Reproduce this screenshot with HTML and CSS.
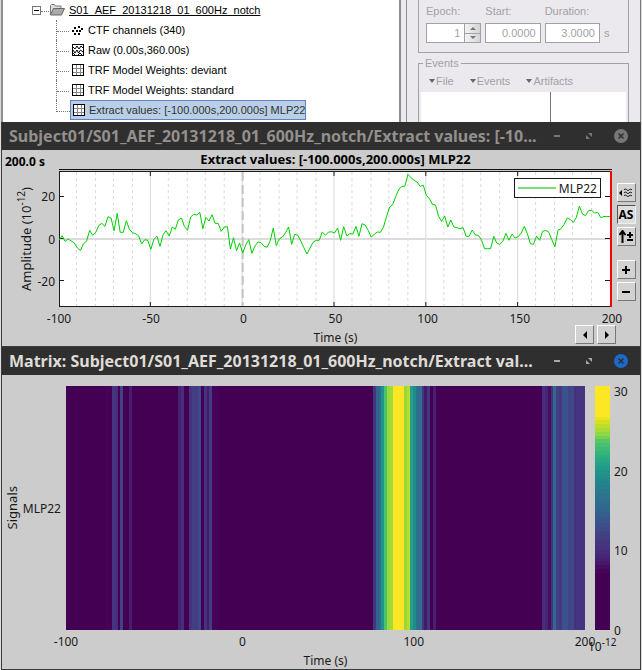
FILE: index.html
```html
<!DOCTYPE html>
<html lang="en">
<head>
  <meta charset="UTF-8">
  <meta name="viewport" content="width=device-width, initial-scale=1.0">
  <title>Extract values - MLP22</title>
  <link rel="stylesheet" href="styles.css">
</head>
<body>
  <!-- Icons shared by several rows and title bars -->
  <svg class="icon-defs" aria-hidden="true">
    <symbol id="icon-matrix" viewBox="0 0 12 12">
      <rect x="0.5" y="0.5" width="11" height="11" fill="#fff" stroke="#000"/>
      <path d="M4.5 1v10M8.5 1v10M1 4.5h10M1 8.5h10" stroke="#888"/>
    </symbol>
    <symbol id="icon-min" viewBox="0 0 14 14">
      <rect x="4" y="6" width="6" height="2" fill="currentColor"/>
    </symbol>
    <symbol id="icon-max" viewBox="0 0 14 14">
      <path d="M6 4h4v4zM4 6v4h4z" fill="currentColor"/>
    </symbol>
    <symbol id="icon-close" viewBox="0 0 14 14">
      <circle cx="7" cy="7" r="7" fill="currentColor"/>
      <path d="M4.500 4.500l5 5M9.500 4.500l-5 5" stroke="#2f2f2f" stroke-width="1.500"/>
    </symbol>
  </svg>

  <main class="desktop">
    <section class="app">
      <div class="tree">
        <div class="tree-root">
          <span class="toggle">
            <svg width="9" height="9"><rect x="0.5" y="0.5" width="8" height="8" fill="#fff" stroke="#777"/><path d="M2 4.5h5" stroke="#000"/></svg>
          </span>
          <svg class="folder" width="15" height="12" viewBox="0 0 15 12">
            <path d="M0.5 10.5v-9l1-1h3l1 1.5h5.500v2.500" fill="#ddd" stroke="#777"/>
            <path d="M0.500 11l3-6.500h11l-3 6.500z" fill="#aaa" stroke="#666"/>
          </svg>
          <a href="#" class="study">S01_AEF_20131218_01_600Hz_notch</a>
        </div>
        <ul class="tree-items">
          <li><a href="#">
            <svg width="12" height="12" viewBox="0 0 12 12"><path d="M2 3h2v2H2zM6 2h2v2H6zM9 4h2v2H9zM0 6h2v2H0zM4 6h2v2H4zM7 6h2v2H7zM2 9h2v2H2zM6 9h2v2H6z"/></svg>
            CTF channels (340)</a></li>
          <li><a href="#">
            <svg width="12" height="12" viewBox="0 0 12 12"><rect x="0.5" y="0.5" width="11" height="11" fill="#fff" stroke="#000"/><path d="M1 3l2 2 2-3 2 3 2-3 2 2M1 6l2 3 2-3 1.500 3 2-3 2.500 2M1 9l2 2M6 11l2-2 2 2" fill="none" stroke="#000"/></svg>
            Raw (0.00s,360.00s)</a></li>
          <li><a href="#"><svg width="12" height="12"><use href="#icon-matrix"/></svg>TRF Model Weights: deviant</a></li>
          <li><a href="#"><svg width="12" height="12"><use href="#icon-matrix"/></svg>TRF Model Weights: standard</a></li>
          <li><a href="#" class="selected"><svg width="12" height="12"><use href="#icon-matrix"/></svg>Extract values: [-100.000s,200.000s] MLP22</a></li>
        </ul>
      </div>

      <div class="splitter"></div>

      <div class="record">
        <div class="group time-group">
          <div class="field">
            <label for="epoch">Epoch:</label>
            <div class="spinner">
              <input id="epoch" type="text" value="1" disabled>
              <div class="spin-buttons">
                <button type="button" aria-label="Next epoch" disabled><svg width="6" height="3"><path d="M0 3l3-3 3 3z" fill="#777"/></svg></button>
                <button type="button" aria-label="Previous epoch" disabled><svg width="6" height="3"><path d="M0 0l3 3 3-3z" fill="#777"/></svg></button>
              </div>
            </div>
          </div>
          <div class="field">
            <label for="start">Start:</label>
            <input id="start" type="text" value="0.0000" disabled>
          </div>
          <div class="field">
            <label for="duration">Duration:</label>
            <input id="duration" type="text" value="3.0000" disabled>
          </div>
          <span class="unit">s</span>
        </div>

        <fieldset class="group events">
          <legend>Events</legend>
          <div class="menu">
            <button type="button" disabled><svg width="6" height="4"><path d="M0 0h6l-3 4z" fill="#666"/></svg>File</button>
            <button type="button" disabled><svg width="6" height="4"><path d="M0 0h6l-3 4z" fill="#666"/></svg>Events</button>
            <button type="button" disabled><svg width="6" height="4"><path d="M0 0h6l-3 4z" fill="#666"/></svg>Artifacts</button>
          </div>
          <div class="lists">
            <div></div>
            <div></div>
          </div>
        </fieldset>
      </div>
    </section>

    <section class="window inactive">
      <header class="titlebar">
        <h1>Subject01/S01_AEF_20131218_01_600Hz_notch/Extract values: [-10...</h1>
        <div class="window-buttons">
          <button type="button" aria-label="Minimize"><svg width="14" height="14"><use href="#icon-min"/></svg></button>
          <button type="button" aria-label="Maximize"><svg width="14" height="14"><use href="#icon-max"/></svg></button>
          <button type="button" class="close" aria-label="Close"><svg width="14" height="14"><use href="#icon-close"/></svg></button>
        </div>
      </header>
      <div class="series">
        <span class="cursor-time">200.0 s</span>
        <h2 class="series-title">Extract values: [-100.000s,200.000s] MLP22</h2>
        <div class="y-label"><span>Amplitude (10<sup>-12</sup>)</span></div>
        <div class="y-ticks"><span>20</span><span>0</span><span>-20</span></div>
        <div class="plot">
          <svg id="series-plot" viewBox="0 0 552 136" preserveAspectRatio="none"></svg>
          <div class="legend"><i></i>MLP22</div>
        </div>
        <div class="x-ticks">
          <span>-100</span><span>-50</span><span>0</span><span>50</span><span>100</span><span>150</span><span>200</span>
        </div>
        <div class="x-label">Time (s)</div>
        <div class="tools">
          <button type="button" aria-label="Display mode"><svg width="14" height="12" viewBox="0 0 14 12"><path d="M0 6l3-3v6z"/><path d="M5 3c2-3 3 2 5 0 1-1 2-1 3 0M5 6c2-3 3 2 5 0 1-1 2-1 3 0M5 9c2-3 3 2 5 0 1-1 2-1 3 0" fill="none" stroke="#000"/></svg></button>
          <button type="button" class="pressed">AS</button>
          <button type="button" aria-label="Flip amplitude"><svg width="15" height="13" viewBox="0 0 15 13"><path d="M3.500 13V2M0.500 5l3-4 3 4" fill="none" stroke="#000" stroke-width="2"/><path d="M8 5h6M11 2v6M8 10h6" stroke="#000" stroke-width="2"/></svg></button>
          <button type="button" class="zoom-in" aria-label="Zoom in"><svg width="8" height="8"><path d="M0 4h8M4 0v8" stroke="#000" stroke-width="2"/></svg></button>
          <button type="button" aria-label="Zoom out"><svg width="8" height="8"><path d="M0 4h8" stroke="#000" stroke-width="2"/></svg></button>
        </div>
        <div class="nav">
          <button type="button" aria-label="Previous page"><svg width="4" height="8"><path d="M4 0v8L0 4z"/></svg></button>
          <button type="button" aria-label="Next page"><svg width="4" height="8"><path d="M0 0v8l4-4z"/></svg></button>
        </div>
      </div>
    </section>

    <section class="window matrix-window">
      <header class="titlebar">
        <h1>Matrix: Subject01/S01_AEF_20131218_01_600Hz_notch/Extract val...</h1>
        <div class="window-buttons">
          <button type="button" aria-label="Minimize"><svg width="14" height="14"><use href="#icon-min"/></svg></button>
          <button type="button" aria-label="Maximize"><svg width="14" height="14"><use href="#icon-max"/></svg></button>
          <button type="button" class="close" aria-label="Close"><svg width="14" height="14"><use href="#icon-close"/></svg></button>
        </div>
      </header>
      <div class="matrix">
        <div class="row-axis"><span>Signals</span></div>
        <div class="row-name">MLP22</div>
        <svg id="heatmap" class="heatmap" preserveAspectRatio="none"></svg>
        <svg id="colorbar" class="colorbar" preserveAspectRatio="none"></svg>
        <div class="bar-ticks"><span>30</span><span>20</span><span>10</span><span>0</span></div>
        <div class="matrix-x">
          <span>-100</span><span>0</span><span>100</span><span>200</span>
          <div class="exponent">10<sup>-12</sup></div>
        </div>
        <div class="matrix-label">Time (s)</div>
      </div>
    </section>
  </main>

  <script src="script.js"></script>
</body>
</html>
```

FILE: styles.css
```css
:root {
  --face: #cccccc;
  --frame: #2f2f2f;
  --panel: #ebe9ed;
  --muted: #a3a1a6;
}

* {
  box-sizing: border-box;
}

body {
  margin: 0;
  background: #dcdcdc;
  font-family: "Noto Sans", "Open Sans", sans-serif;
  font-size: 12px;
  color: #1a1a1a;
}

button,
input {
  font: inherit;
  color: inherit;
}

button {
  padding: 0;
  border: 0;
  background: none;
}

svg {
  display: block;
}

h1,
h2 {
  margin: 0;
}

.icon-defs {
  position: absolute;
  width: 0;
  height: 0;
}

.desktop {
  display: flex;
  flex-direction: column;
  min-height: 100vh;
}

/* Main application behind the figures */
.app {
  display: grid;
  grid-template-columns: 398fr 8px 233fr;
  height: 122px;
  overflow: hidden;
  margin: 0 1px;
  border-right: 1px solid #777;
  background: var(--panel);
  font-family: "Liberation Sans", Arial, sans-serif;
  font-size: 11px;
}

.tree {
  border-left: 2px solid #8e8e8e;
  background: #fff;
  color: #000;
  overflow: hidden;
  white-space: nowrap;
}

.tree a {
  color: inherit;
  text-decoration: none;
}

.tree-root {
  display: flex;
  align-items: center;
  height: 20px;
  padding-left: 29px;
}

.toggle {
  display: flex;
  width: 18px;
}

.toggle::after {
  content: "";
  width: 8px;
  height: 5px;
  border-bottom: 1px dotted #777;
}

.tree .study {
  margin-left: 4px;
  text-decoration: underline;
}

.tree-items {
  margin: 0;
  padding: 0 0 0 53px;
  list-style: none;
}

.tree-items li {
  display: flex;
  height: 20px;
  border-left: 1px dotted #777;
}

.tree-items li:last-child {
  border-left-color: transparent;
}

.tree-items li::before {
  content: "";
  width: 12px;
  height: 11px;
  border-bottom: 1px dotted #777;
}

.tree-items li:last-child::before {
  width: 13px;
  margin-left: -1px;
  border-left: 1px dotted #777;
}

.tree-items a {
  display: flex;
  align-items: center;
  gap: 4px;
  padding: 0 0 0 2px;
  border: 1px solid transparent;
}

.tree-items .selected {
  border-color: #6382bf;
  background: #b8cfe5;
  color: #333;
}

.splitter {
  border: solid #8e8e8e;
  border-width: 0 1px 0 2px;
}

.record {
  min-width: 0;
  padding: 0 11px;
  color: var(--muted);
}

.group {
  margin: 0;
  border: 1px solid var(--muted);
}

.time-group {
  display: flex;
  align-items: flex-end;
  gap: 4px;
  height: 53px;
  padding: 0 20px 9px 7px;
  border-top: 0;
}

.field {
  flex: 1;
  min-width: 0;
}

.field label {
  display: block;
  margin-bottom: 4px;
  line-height: 16px;
}

.record input {
  display: block;
  width: 100%;
  height: 20px;
  padding: 0 4px;
  border: 1px solid var(--muted);
  background: #fff;
  color: var(--muted);
  text-align: right;
}

.spinner {
  display: flex;
}

.spin-buttons {
  display: flex;
  flex-direction: column;
  flex: none;
  width: 16px;
  border: 1px solid var(--muted);
  border-left: 0;
}

.spin-buttons button {
  display: flex;
  flex: 1;
  align-items: center;
  justify-content: center;
  background: linear-gradient(to right, #f4f4f4, #d4d4d8);
}

.spin-buttons button + button {
  border-top: 1px solid var(--muted);
}

.unit {
  width: 4px;
  line-height: 20px;
}

.events {
  height: 80px;
  margin-top: 3px;
  padding: 0 2px;
}

.events legend {
  margin-left: 2px;
  padding: 0 2px;
  line-height: 14px;
}

.menu {
  display: flex;
  gap: 16px;
  height: 22px;
  padding-left: 8px;
}

.menu button {
  display: flex;
  align-items: center;
  gap: 1px;
  color: var(--muted);
}

.lists {
  display: flex;
  height: 40px;
}

.lists div {
  flex: 130;
  background: #fff;
}

.lists div + div {
  flex: 75;
  border-left: 1px solid #777;
}

/* Figure windows */
.window {
  display: flex;
  flex-direction: column;
  margin: 0 1px;
  border: 1px solid #3a3d3e;
  border-top: 0;
  background: var(--face);
}

.titlebar {
  display: flex;
  align-items: center;
  justify-content: space-between;
  height: 28px;
  padding: 0 12px 0 7px;
  background: var(--frame);
  color: #dfdbd7;
}

.titlebar h1 {
  overflow: hidden;
  font-size: 16px;
  font-weight: 700;
  line-height: 28px;
  white-space: nowrap;
}

.window-buttons {
  display: flex;
  flex: none;
  gap: 18px;
  color: #a8a8a8;
}

.window-buttons .close {
  color: #1b6acb;
}

.inactive .titlebar {
  color: #948f8c;
}

.inactive .window-buttons,
.inactive .window-buttons .close {
  color: #777;
}

/* Time series figure */
.series {
  display: grid;
  grid-template-columns: 34px 23px 1fr 28px;
  grid-template-rows: 21px 136px 22px 17px;
}

.cursor-time {
  grid-area: 1 / 1 / 2 / 3;
  padding-left: 3px;
  color: #000;
  font-weight: 700;
  line-height: 24px;
  white-space: nowrap;
}

.series-title {
  grid-area: 1 / 3;
  height: 20px;
  border-bottom: 1px solid #111;
  color: #000;
  font-size: 13px;
  line-height: 19px;
  text-align: center;
}

.y-label {
  grid-area: 2 / 1;
  display: flex;
  align-items: center;
  justify-content: flex-end;
}

.y-label span,
.row-axis span {
  writing-mode: vertical-rl;
  transform: rotate(180deg);
  white-space: nowrap;
}

.y-label span {
  font-size: 13px;
  line-height: 20px;
}

sup {
  font-size: 10px;
  line-height: 0;
}

.y-ticks {
  grid-area: 2 / 2;
  display: flex;
  flex-direction: column;
  justify-content: space-between;
  padding: 17px 4px 17px 0;
  line-height: 17px;
  text-align: right;
}

.plot {
  position: relative;
  grid-area: 2 / 3;
  border-right: 2px solid #f00;
}

.plot svg {
  width: 100%;
  height: 100%;
}

#series-plot * {
  fill: none;
  vector-effect: non-scaling-stroke;
}

#series-plot .bg {
  fill: #fff;
}

.grid-minor {
  stroke: #dadada;
  stroke-dasharray: 3 3;
}

.grid-major {
  stroke: #d8d8d8;
}

.grid-zero {
  stroke: #dcdcdc;
  stroke-width: 2;
}

.time-zero {
  stroke: #c4c4c4;
  stroke-width: 2;
  stroke-dasharray: 9 4;
}

.axis {
  stroke: #1a1a1a;
}

.trace {
  stroke: #00d000;
  stroke-width: 1;
}

.legend {
  position: absolute;
  top: 7px;
  right: 9px;
  display: flex;
  align-items: center;
  gap: 3px;
  height: 20px;
  padding: 0 3px;
  border: 1px solid #1a1a1a;
  background: #fff;
}

.legend i {
  width: 38px;
  height: 2px;
  background: #78e078;
}

.x-ticks {
  grid-area: 3 / 3;
  display: flex;
  justify-content: space-between;
  line-height: 24px;
}

.x-ticks span,
.matrix-x span {
  display: flex;
  justify-content: center;
  width: 0;
}

.x-label {
  grid-area: 4 / 3;
  line-height: 17px;
  text-align: center;
}

.tools {
  grid-area: 2 / 4 / 4 / 5;
  display: flex;
  flex-direction: column;
  align-items: center;
  gap: 3px;
  padding-top: 12px;
}

.tools button,
.nav button {
  display: flex;
  align-items: center;
  justify-content: center;
  width: 19px;
  height: 19px;
  border: 1px solid;
  border-color: #fff #777 #777 #fff;
  background: #d2d2d2;
  color: #000;
}

.tools .pressed {
  border-color: #555 #eee #eee #555;
  background: #dedede;
  font-weight: 700;
}

.tools .zoom-in {
  margin-top: 11px;
}

.nav {
  grid-area: 3 / 3 / 5 / 5;
  display: flex;
  align-self: end;
  justify-self: end;
  gap: 3px;
  padding: 0 24px 2px 0;
}

/* Matrix figure */
.matrix-window {
  flex: 1;
}

.matrix {
  display: grid;
  flex: 1;
  grid-template-columns: 19px 45px 1fr 10px 15px 30px;
  grid-template-rows: minmax(160px, 1fr) 22px 17px;
  padding-top: 11px;
}

.row-axis {
  grid-area: 1 / 1;
  display: flex;
  align-items: center;
  justify-content: center;
  font-size: 13px;
}

.row-name {
  grid-area: 1 / 2;
  align-self: center;
  padding-right: 5px;
  text-align: right;
}

/* Images stretch to the row and never size it */
.heatmap,
.colorbar {
  contain: size;
  width: 100%;
  height: 100%;
}

.heatmap {
  grid-area: 1 / 3;
}

.colorbar {
  grid-area: 1 / 5;
}

.bar-ticks {
  grid-area: 1 / 6;
  display: flex;
  flex-direction: column;
  justify-content: space-between;
  margin: -3px 0 -9px;
  padding-left: 4px;
  line-height: 17px;
}

.matrix-x {
  position: relative;
  grid-area: 2 / 3;
  display: grid;
  grid-template-columns: 34fr 33fr 33fr 0;
  line-height: 24px;
}

/* The scale factor prints over the last tick label */
.exponent {
  position: absolute;
  top: 5px;
  left: 100%;
  padding-left: 3px;
  white-space: nowrap;
}

.matrix-label {
  grid-area: 3 / 3;
  line-height: 17px;
  text-align: center;
}
```

FILE: script.js
```js
// MLP22 time series, 181 samples from -100 s to 200 s
const samples = [
  -4, 10, -7, 0, -6, -12, -27, -35, -14, -7,
  26, 11, 20, 41, 47, 38, 67, 63, 25, 77,
  20, 20, 55, 29, 19, 16, 10, -15, -2, -4,
  -31, -1, 8, -22, 13, 25, 9, 36, 29, 57,
  63, 37, 26, 66, 74, 72, 80, 31, 65, 54,
  73, 47, 47, 23, 36, 37, -30, 4, -35, -12,
  -42, -18, -2, -43, -21, -9, -11, -22, -25, -5,
  33, -20, 1, 6, 19, 36, -16, 14, 11, -7,
  -26, -45, -27, -10, -4, -4, 21, 12, 20, 22,
  18, 33, -4, 37, 9, 16, 15, 38, 8, 46,
  42, 26, 5, 15, 21, 20, 36, 67, 96, 103,
  127, 149, 158, 159, 194, 184, 177, 171, 158, 162,
  131, 121, 104, 102, 68, 53, 69, 36, 57, 36,
  34, 31, 34, 8, 8, 27, 12, 11, -2, -29,
  -29, -29, 8, -12, -16, -7, 17, -4, 15, 3,
  7, 18, 38, 16, -14, -16, 9, -4, 23, 26,
  20, -2, -23, 26, 31, 44, 63, 59, 50, 65,
  99, 75, 70, 85, 86, 78, 80, 64, 68, 67,
  68
];
const UNIT = 0.157; // 1e-12 per count
const values = samples.map(s => s * UNIT);

// Colormap stops: value, then r g b
const stops = [
  [7.2, 68, 1, 84],
  [8.5, 72, 26, 108],
  [10, 71, 47, 125],
  [12.5, 63, 71, 136],
  [15, 49, 100, 141],
  [17.5, 41, 121, 142],
  [20, 31, 149, 139],
  [22, 46, 179, 124],
  [23.5, 78, 195, 107],
  [24.5, 139, 214, 70],
  [26, 210, 226, 27],
  [27, 253, 231, 37]
];

function colorFor(v) {
  const last = stops.length - 1;
  if (v <= stops[0][0]) return `rgb(${stops[0].slice(1).join(',')})`;
  if (v >= stops[last][0]) return `rgb(${stops[last].slice(1).join(',')})`;
  const i = stops.findIndex(s => s[0] > v);
  const a = stops[i - 1];
  const b = stops[i];
  const t = (v - a[0]) / (b[0] - a[0]);
  const rgb = [1, 2, 3].map(k => Math.round(a[k] + (b[k] - a[k]) * t));
  return `rgb(${rgb.join(',')})`;
}

function add(parent, name, attrs) {
  const el = document.createElementNS('http://www.w3.org/2000/svg', name);
  for (const key in attrs) el.setAttribute(key, attrs[key]);
  parent.appendChild(el);
}

function drawSeries() {
  const svg = document.getElementById('series-plot');
  const W = 552;
  const H = 136;
  const x = t => Math.round((t + 100) / 300 * W);
  const y = v => 68 - v * 2.12;
  add(svg, 'rect', { class: 'bg', width: W, height: H });

  for (let t = -90; t < 200; t += 10) {
    const cls = t % 50 === 0 ? 'grid-major' : 'grid-minor';
    add(svg, 'path', { class: cls, d: `M${x(t) - 0.5} 1V${H - 1}` });
  }
  add(svg, 'path', { class: 'grid-zero', d: `M0 68H${W}` });
  add(svg, 'path', { class: 'time-zero', d: `M${x(0)} 1V${H - 1}` });

  add(svg, 'path', { class: 'axis', d: `M0.5 0V${H}M0 0.5H${W}M0 ${H - 0.5}H${W}` });
  for (let t = -50; t < 200; t += 50) {
    if (t !== 0) add(svg, 'path', { class: 'axis', d: `M${x(t) - 0.5} 0v5M${x(t) - 0.5} ${H}v-5` });
  }
  [20, 0, -20].forEach(v => {
    const ty = Math.round(y(v)) - 0.5;
    add(svg, 'path', { class: 'axis', d: `M0 ${ty}h5M${W} ${ty}h-5` });
  });

  const step = W / (values.length - 1);
  const points = values.map((v, i) => `${(i * step).toFixed(1)},${y(v).toFixed(1)}`);
  add(svg, 'polyline', { class: 'trace', points: points.join(' ') });
}

function drawHeatmap() {
  const svg = document.getElementById('heatmap');
  svg.setAttribute('viewBox', `0 0 ${values.length} 1`);
  svg.setAttribute('shape-rendering', 'crispEdges');
  values.forEach((v, i) => {
    add(svg, 'rect', { x: i, width: 1, height: 1, fill: colorFor(v) });
  });
}

function drawColorbar() {
  const svg = document.getElementById('colorbar');
  const n = 64;
  const max = 30.6;
  svg.setAttribute('viewBox', `0 0 1 ${n}`);
  svg.setAttribute('shape-rendering', 'crispEdges');
  for (let i = 0; i < n; i++) {
    add(svg, 'rect', { y: i, width: 1, height: 1, fill: colorFor(max * (1 - (i + 0.5) / n)) });
  }
}

drawSeries();
drawHeatmap();
drawColorbar();
```
